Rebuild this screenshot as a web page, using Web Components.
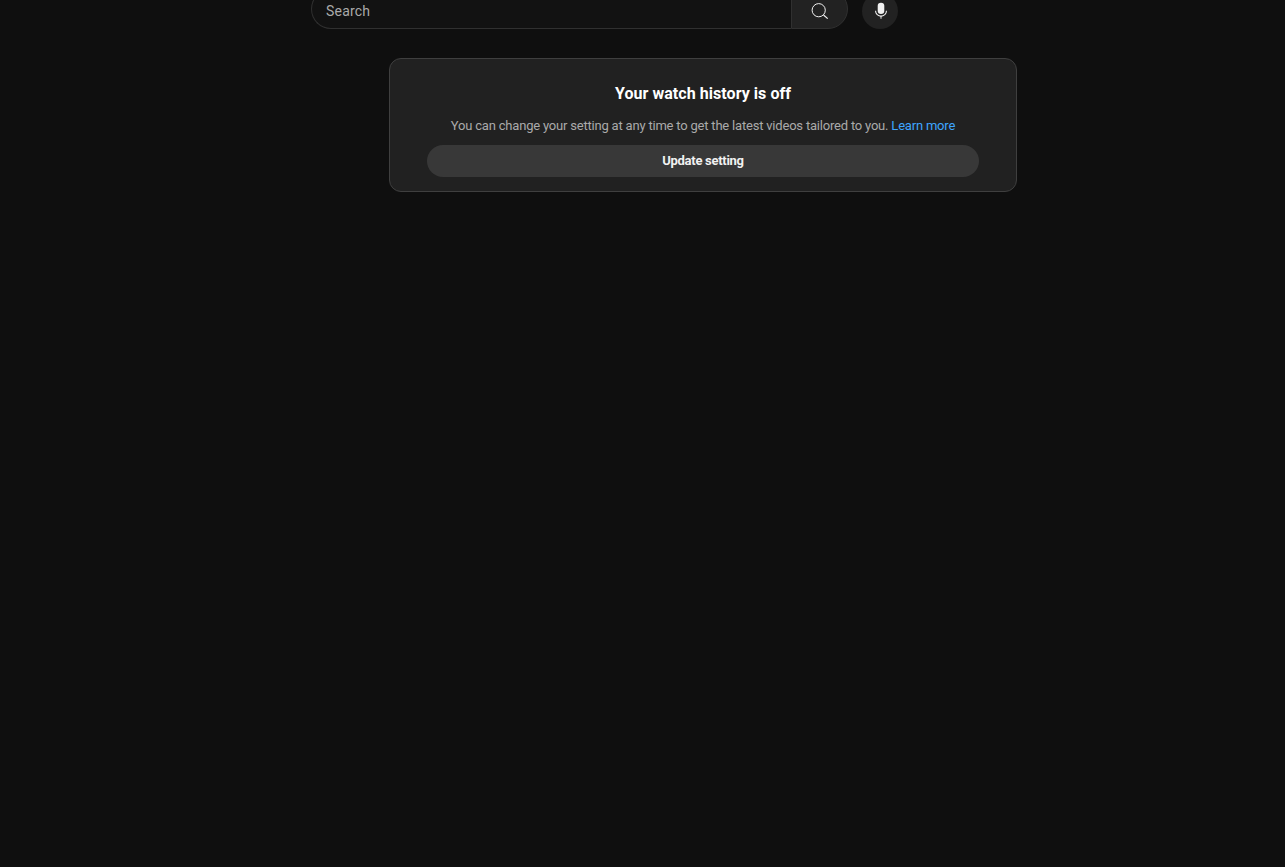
<!DOCTYPE html>
<html>
<head>
<meta charset="utf-8">
<style>
  html, body { margin: 0; height: 100%; background: #0f0f0f; overflow: hidden; }
  body { font-family: Roboto, "Liberation Sans", sans-serif; color: #f1f1f1; }
</style>
</head>
<body>
<search-bar></search-bar>
<notice-card heading="Your watch history is off" action="Update setting">
  You can change your setting at any time to get the latest videos tailored to you. <a href="#" slot="link">Learn more</a>
</notice-card>

<template id="search-bar-template">
  <style>
    :host { display: flex; align-items: center; margin: -11px 0 0 311px; height: 40px; }
    .input {
      box-sizing: border-box; width: 480px; height: 40px; padding-left: 14px;
      display: flex; align-items: center;
      border: 1px solid #303030; border-right: 0; border-radius: 20px 0 0 20px;
      background: #121212; color: #aaa; font-size: 14px; letter-spacing: 0.2px; padding-top: 3px;
    }
    .btn {
      box-sizing: border-box; width: 57px; height: 40px; padding-right: 1px;
      display: flex; align-items: center; justify-content: center;
      border: 1px solid #303030; border-radius: 0 20px 20px 0; background: #222;
    }
    .btn svg { margin-top: 3px; }
    .mic {
      width: 36px; height: 36px; margin-left: 14px; margin-top: 4px; border-radius: 50%;
      display: flex; align-items: center; justify-content: center; background: #222;
    }
    .mic svg { margin-left: 2px; }
  </style>
  <div class="input">Search</div>
  <div class="btn">
    <svg width="24" height="24" viewBox="0 0 24 24" fill="none">
      <circle cx="11.7" cy="11.2" r="6.6" stroke="#f1f1f1" stroke-width="1"/>
      <path d="M16.5 16L20.7 19.6" stroke="#f1f1f1" stroke-width="1.2"/>
    </svg>
  </div>
  <div class="mic">
    <svg width="24" height="24" viewBox="0 0 24 24" fill="#f1f1f1">
      <rect x="8.7" y="3.7" width="6.6" height="11.3" rx="3.3"/>
      <path d="M6 11.7h1.1a4.9 4.9 0 0 0 9.8 0H18a6 6 0 0 1-5.5 5.97V19.7h-1v-2.03A6 6 0 0 1 6 11.7z"/>
    </svg>
  </div>
</template>

<template id="notice-card-template">
  <style>
    :host {
      display: block; box-sizing: border-box; width: 628px; height: 134px;
      margin: 29px 0 0 389px; padding: 24px 37px 0;
      background: #212121; border: 1px solid #3f3f3f; border-radius: 12px;
      text-align: center;
    }
    h2 { margin: 0; font-size: 16px; line-height: 22px; font-weight: 700; letter-spacing: 0.05px; color: #fff; }
    p { margin: 12px 0 0; font-size: 13px; line-height: 18px; letter-spacing: -0.2px; color: #aaa; }
    ::slotted(a) { color: #3ea6ff; text-decoration: none; }
    button {
      display: block; width: 100%; height: 32px; margin-top: 10px; padding: 0 0 2px;
      border: 0; border-radius: 16px; background: #383838; color: #f1f1f1;
      font: 700 13px Roboto, "Liberation Sans", sans-serif; letter-spacing: -0.28px;
    }
  </style>
  <h2></h2>
  <p><slot></slot><slot name="link"></slot></p>
  <button></button>
</template>

<script>
  class SearchBar extends HTMLElement {
    constructor() {
      super();
      this.attachShadow({ mode: 'open' });
      this.shadowRoot.appendChild(document.getElementById('search-bar-template').content.cloneNode(true));
    }
  }

  class NoticeCard extends HTMLElement {
    constructor() {
      super();
      this.attachShadow({ mode: 'open' });
      this.shadowRoot.appendChild(document.getElementById('notice-card-template').content.cloneNode(true));
    }

    connectedCallback() {
      this.shadowRoot.querySelector('h2').textContent = this.getAttribute('heading');
      this.shadowRoot.querySelector('button').textContent = this.getAttribute('action');
    }
  }

  customElements.define('search-bar', SearchBar);
  customElements.define('notice-card', NoticeCard);
</script>
</body>
</html>
